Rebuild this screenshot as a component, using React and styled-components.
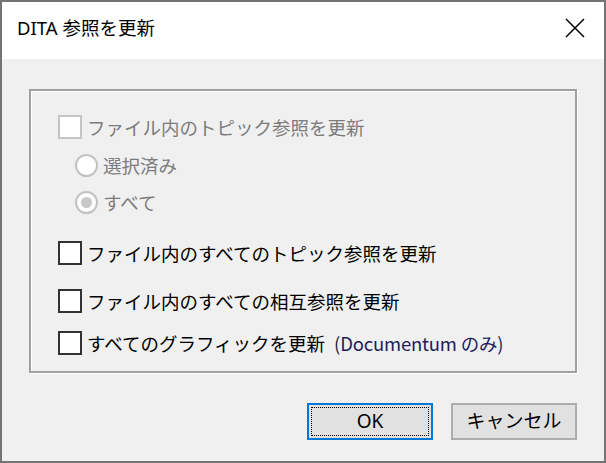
import React from 'react';
import styled, { createGlobalStyle, css } from 'styled-components';

const GlobalStyle = createGlobalStyle`
  html, body {
    margin: 0;
    padding: 0;
    background: #ffffff;
  }
  body {
    font-family: 'Noto Sans', 'Noto Sans CJK JP', sans-serif;
  }
`;

const Frame = styled.div`
  width: 606px;
  height: 463px;
  box-sizing: border-box;
  border: 2px solid #747474;
  display: flex;
  flex-direction: column;
  background: #f0f0f0;
`;

const TitleBar = styled.div`
  height: 57px;
  background: #ffffff;
  display: flex;
  align-items: center;
  justify-content: space-between;
  padding: 0 0 5px 15px;
  box-sizing: border-box;
`;

const Title = styled.span`
  font-size: 18.5px;
  line-height: 24px;
  color: #000000;
`;

const CloseButton = styled.button`
  width: 46px;
  height: 52px;
  margin-right: 6px;
  border: none;
  background: none;
  padding: 0;
  display: flex;
  align-items: center;
  justify-content: center;
  cursor: pointer;
`;

const Body = styled.div`
  flex: 1;
  display: flex;
  flex-direction: column;
  padding: 30px 27px 21px 27px;
`;

const GroupBox = styled.div`
  height: 284px;
  box-sizing: border-box;
  border: 2px solid #a0a0a0;
  box-shadow: inset 1px 1px 0 #ffffff, 1px 1px 0 #ffffff;
  padding: 21px 0 0 27px;
  display: flex;
  flex-direction: column;
`;

const Row = styled.label`
  height: 30px;
  display: flex;
  align-items: center;
  gap: 5px;
  margin-top: ${(p) => p.$gap || 0}px;
  margin-left: ${(p) => (p.$indent ? 17 : 0)}px;
  font-size: 18.5px;
  line-height: 24px;
  white-space: nowrap;
  color: ${(p) => (p.$disabled ? '#7c7c7c' : '#000000')};
  font-family: 'Noto Sans CJK JP', sans-serif;
`;

const Box = styled.span`
  width: 24px;
  height: 24px;
  box-sizing: border-box;
  flex: none;
  background: #ffffff;
  border: 2px solid ${(p) => (p.$disabled ? '#c4c4c4' : '#333333')};
`;

const Radio = styled.span`
  width: 23px;
  height: 23px;
  box-sizing: border-box;
  flex: none;
  border-radius: 50%;
  background: #ffffff;
  border: 2px solid #c2c2c2;
  display: flex;
  align-items: center;
  justify-content: center;

  ${(p) =>
    p.$checked &&
    css`
      &::after {
        content: '';
        width: 11px;
        height: 11px;
        border-radius: 50%;
        background: #c8c8c8;
      }
    `}
`;

const Note = styled.span`
  color: #1d1d5c;
  margin-left: 4px;
  letter-spacing: -0.2px;
`;

const ButtonBar = styled.div`
  margin-top: 30px;
  display: flex;
  justify-content: flex-end;
  gap: 18px;
`;

const Button = styled.button`
  position: relative;
  width: 126px;
  height: 37px;
  box-sizing: border-box;
  background: #e1e1e1;
  border: 2px solid ${(p) => (p.$primary ? '#0078d7' : '#adadad')};
  font-family: 'Noto Sans', 'Noto Sans CJK JP', sans-serif;
  font-size: 19px;
  line-height: 24px;
  color: #000000;
  padding: 0 0 2px;
  cursor: pointer;

  ${(p) =>
    p.$primary &&
    css`
      &::after {
        content: '';
        position: absolute;
        inset: 2px;
        border: 1px dotted #000000;
      }
    `}
`;

const CloseIcon = () => (
  <svg width="20" height="20" viewBox="0 0 20 20">
    <path d="M1 1 L19 19 M19 1 L1 19" stroke="#000" strokeWidth="1.5" fill="none" />
  </svg>
);

const App = () => {
  return (
    <>
      <GlobalStyle />
      <Frame>
        <TitleBar>
          <Title>DITA 参照を更新</Title>
          <CloseButton type='button'>
            <CloseIcon />
          </CloseButton>
        </TitleBar>
        <Body>
          <GroupBox>
            <Row $disabled>
              <Box $disabled />
              ファイル内のトピック参照を更新
            </Row>
            <Row $disabled $indent $gap={8}>
              <Radio />
              選択済み
            </Row>
            <Row $disabled $indent $gap={7}>
              <Radio $checked />
              すべて
            </Row>
            <Row $gap={21}>
              <Box />
              ファイル内のすべてのトピック参照を更新
            </Row>
            <Row $gap={18}>
              <Box />
              ファイル内のすべての相互参照を更新
            </Row>
            <Row $gap={12}>
              <Box />
              すべてのグラフィックを更新<Note>(Documentum のみ)</Note>
            </Row>
          </GroupBox>
          <ButtonBar>
            <Button type='button' $primary>OK</Button>
            <Button type='button'>キャンセル</Button>
          </ButtonBar>
        </Body>
      </Frame>
    </>
  );
};

export default App;
